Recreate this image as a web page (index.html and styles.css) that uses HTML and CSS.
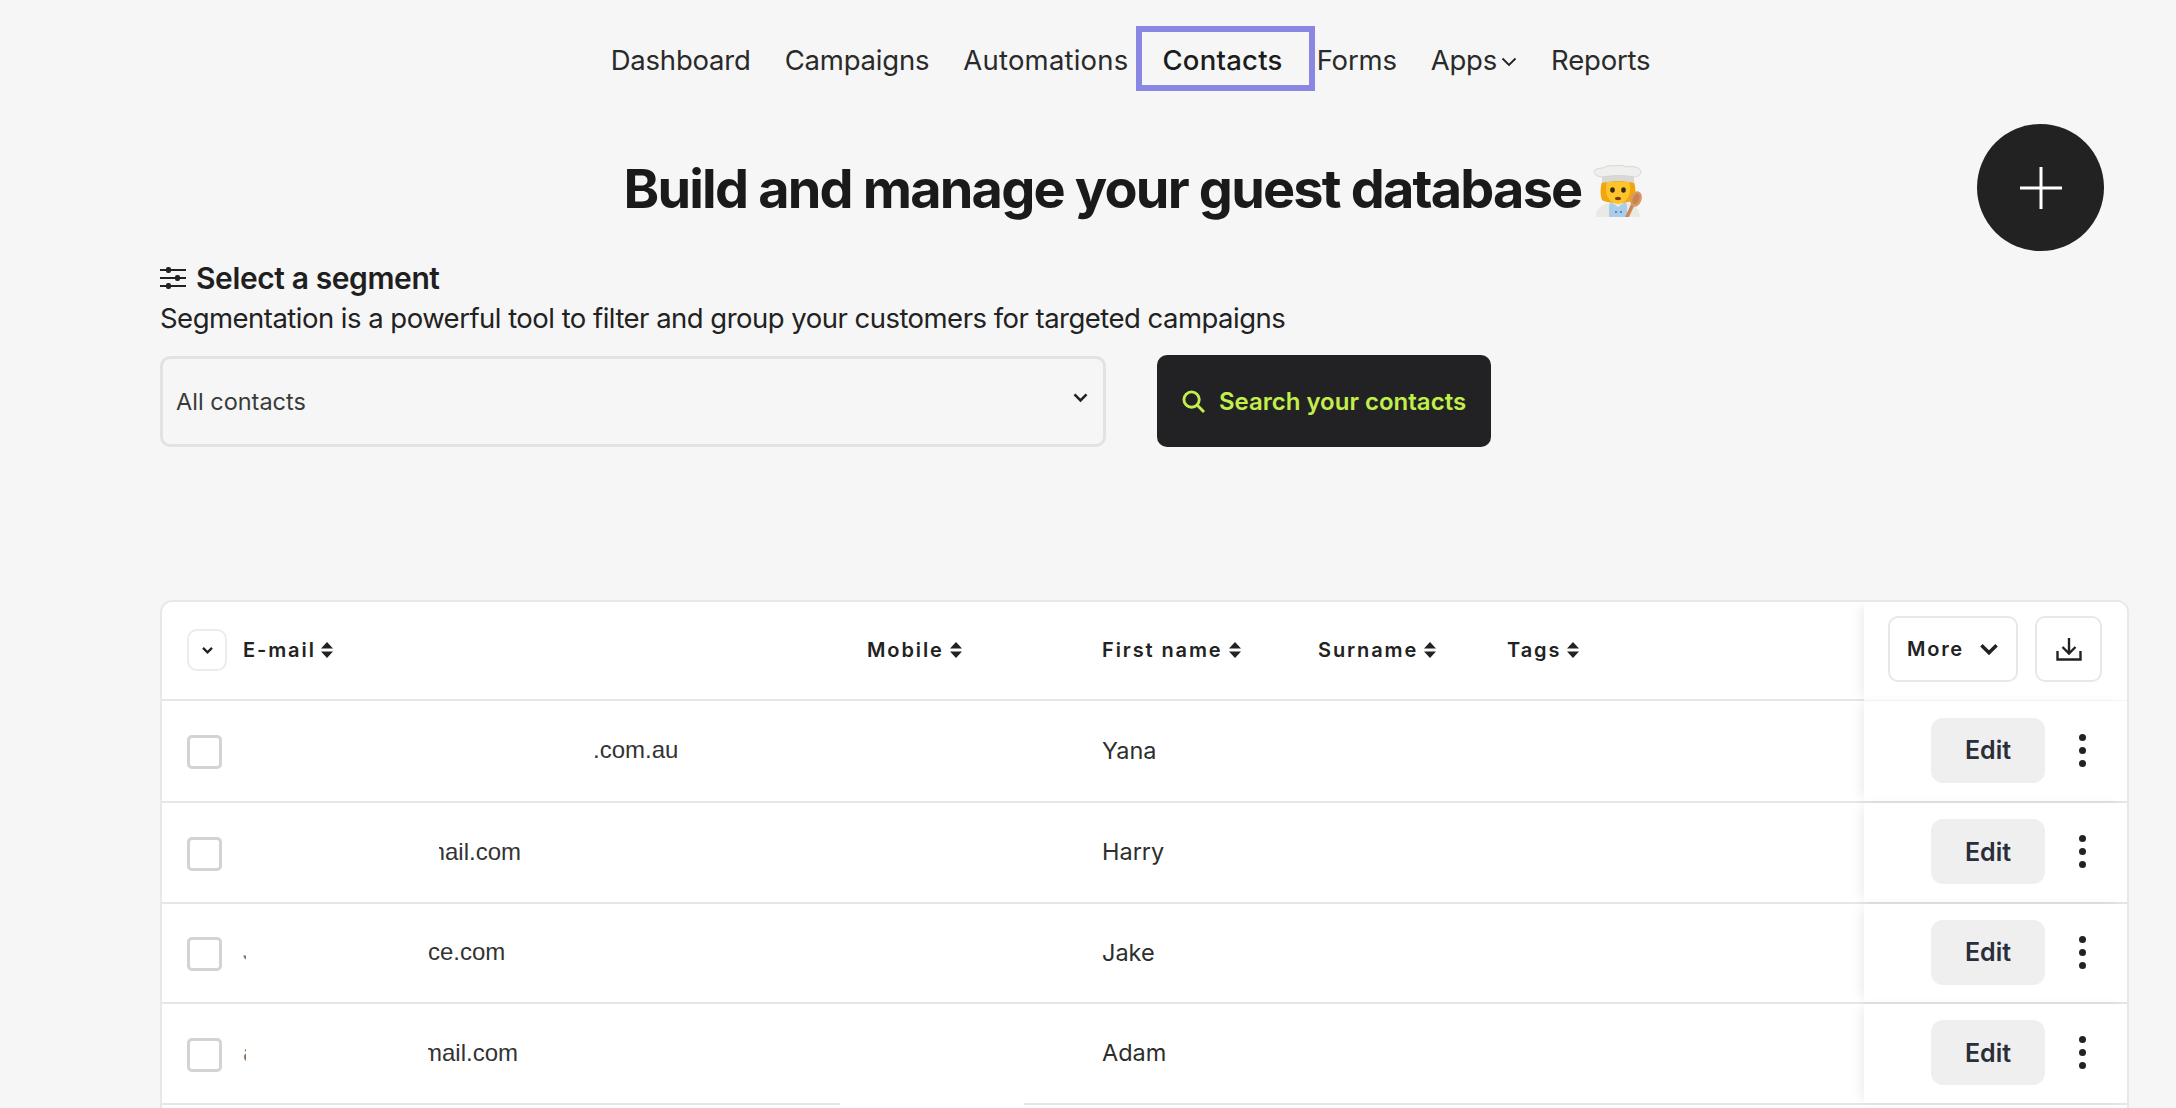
FILE: index.html
```html
<!DOCTYPE html>
<html lang="en">
<head>
<meta charset="utf-8">
<title>Contacts</title>
<link rel="stylesheet" href="styles.css">
</head>
<body>
<nav class="nav">
  <a class="nav-item">Dashboard</a>
  <a class="nav-item">Campaigns</a>
  <a class="nav-item nav-auto">Automations</a>
  <a class="nav-item nav-active">Contacts</a>
  <a class="nav-item">Forms</a>
  <a class="nav-item nav-apps">Apps
    <svg class="nav-chev" viewBox="0 0 16 10"><path d="M1.5 1.5 8 8l6.500-6.500" fill="none" stroke="#222" stroke-width="1.800"/></svg>
  </a>
  <a class="nav-item">Reports</a>
</nav>

<header class="hero">
  <h1 class="title">Build and manage your guest database
    <svg class="chef" viewBox="0 0 48 52">
      <path d="M2 52c0-7 4-11 10-13l12-3 12 3c6 2 10 6 10 13z" fill="#e9e9e6"/>
      <path d="M17 37l7 5 7-5 2 3v12H15V40z" fill="#a9cdea"/>
      <path d="M21 46h2v2h-2zM26 46h2v2h-2z" fill="#5d87ad"/>
      <path d="M9 14h30c3 8 3 15 1 21-5 4-27 4-32 0-2-6-2-13 1-21z" fill="#f2a50c"/>
      <path d="M13 17h22c1 2 1 5 1 8 0 8-6 14-12 14s-12-6-12-14c0-3 0-6 1-8z" fill="#fdc52b"/>
      <ellipse cx="18.500" cy="25" rx="2.300" ry="2.800" fill="#3a2812"/>
      <ellipse cx="29.500" cy="25" rx="2.300" ry="2.800" fill="#3a2812"/>
      <ellipse cx="24" cy="33.500" rx="3" ry="1.700" fill="#7c3a10"/>
      <path d="M8 9h32v9c-9-2.500-23-2.500-32 0z" fill="#d8d8d6"/>
      <path d="M9 12C2 12-1 8 1 5c2-2 6-2 8-2 3-2 8-3 12-2 4-1 8-1 11 1 3-1 8-1 12 1 5 3 4 8-4 9-9-2-22-2-31 0z" fill="#efefed" stroke="#cfcfcd" stroke-width=".8"/>
      <path d="M33 52l7-15" stroke="#c98a55" stroke-width="3.600" stroke-linecap="round"/>
      <ellipse cx="42" cy="34" rx="5.500" ry="8" fill="#d99866" transform="rotate(20 42 34)"/>
      <ellipse cx="42" cy="34" rx="3.200" ry="5.500" fill="#c68450" transform="rotate(20 42 34)"/>
    </svg>
  </h1>
  <button class="fab" aria-label="Add">
    <svg viewBox="0 0 44 44"><path d="M22 1v42M1 22h42" stroke="#fff" stroke-width="3" fill="none"/></svg>
  </button>
</header>

<section class="segment">
  <h2 class="seg-title">
    <svg class="seg-icon" viewBox="0 0 26 24"><path d="M0 4h26M0 12h26M0 20h26" stroke="#222" stroke-width="2" fill="none"/><rect x="6" y="1" width="5" height="6" rx="2" fill="#222"/><rect x="15" y="9" width="5" height="6" rx="2" fill="#222"/><rect x="6" y="17" width="5" height="6" rx="2" fill="#222"/></svg>
    Select a segment</h2>
  <p class="seg-desc">Segmentation is a powerful tool to filter and group your customers for targeted campaigns</p>
  <div class="seg-controls">
    <div class="select">All contacts
      <svg class="select-chev" viewBox="0 0 14 10"><path d="M2 2l5 5 5-5" fill="none" stroke="#222" stroke-width="2.200"/></svg>
    </div>
    <button class="search">
      <svg class="search-icon" viewBox="0 0 24 24"><circle cx="10" cy="10" r="8" fill="none" stroke="#c3ee4b" stroke-width="3"/><path d="M16 16l7 7" stroke="#c3ee4b" stroke-width="3" fill="none"/></svg>
      Search your contacts</button>
  </div>
</section>

<section class="table">
  <div class="row row-head">
    <div class="c-check"><span class="caret-btn"><svg viewBox="0 0 14 10"><path d="M2 2l5 5 5-5" fill="none" stroke="#222" stroke-width="2.600"/></svg></span></div>
    <div class="c-email th">E-mail <svg class="sort" viewBox="0 0 12 16"><path d="M6 0l6 6.500H0zM6 16l6-6.500H0z" fill="#222"/></svg></div>
    <div class="c-mobile th">Mobile <svg class="sort" viewBox="0 0 12 16"><path d="M6 0l6 6.500H0zM6 16l6-6.500H0z" fill="#222"/></svg></div>
    <div class="c-first th">First name <svg class="sort" viewBox="0 0 12 16"><path d="M6 0l6 6.500H0zM6 16l6-6.500H0z" fill="#222"/></svg></div>
    <div class="c-sur th">Surname <svg class="sort" viewBox="0 0 12 16"><path d="M6 0l6 6.500H0zM6 16l6-6.500H0z" fill="#222"/></svg></div>
    <div class="c-tags th">Tags <svg class="sort" viewBox="0 0 12 16"><path d="M6 0l6 6.500H0zM6 16l6-6.500H0z" fill="#222"/></svg></div>
    <div class="c-sticky sticky-head">
      <button class="more">More <svg viewBox="0 0 18 12"><path d="M2 2l7 7 7-7" fill="none" stroke="#222" stroke-width="3.200"/></svg></button>
      <button class="dl" aria-label="Download"><svg viewBox="0 0 26 24"><path d="M13 1v15M6.500 10l6.500 6.500 6.500-6.500M1.500 14v8.500h23V14" fill="none" stroke="#222" stroke-width="2.400"/></svg></button>
    </div>
  </div>

  <div class="row row-tall">
    <div class="c-check"><span class="check"></span></div>
    <div class="c-email"><span class="frag frag-a">.com.au</span></div>
    <div class="c-mobile"></div>
    <div class="c-first td">Yana</div>
    <div class="c-sur"></div>
    <div class="c-tags"></div>
    <div class="c-sticky"><button class="edit">Edit</button><span class="kebab"><i></i><i></i><i></i></span></div>
  </div>
  <div class="row">
    <div class="c-check"><span class="check"></span></div>
    <div class="c-email"><span class="frag frag-b">mail.com</span></div>
    <div class="c-mobile"></div>
    <div class="c-first td">Harry</div>
    <div class="c-sur"></div>
    <div class="c-tags"></div>
    <div class="c-sticky"><button class="edit">Edit</button><span class="kebab"><i></i><i></i><i></i></span></div>
  </div>
  <div class="row row-short">
    <div class="c-check"><span class="check"></span></div>
    <div class="c-email"><span class="sliver">J</span><span class="frag frag-c">ce.com</span></div>
    <div class="c-mobile"></div>
    <div class="c-first td">Jake</div>
    <div class="c-sur"></div>
    <div class="c-tags"></div>
    <div class="c-sticky"><button class="edit">Edit</button><span class="kebab"><i></i><i></i><i></i></span></div>
  </div>
  <div class="row">
    <div class="c-check"><span class="check"></span></div>
    <div class="c-email"><span class="sliver">a</span><span class="frag frag-d">mail.com</span></div>
    <div class="c-mobile"></div>
    <div class="c-first td">Adam</div>
    <div class="c-sur"></div>
    <div class="c-tags"></div>
    <div class="c-sticky"><button class="edit">Edit</button><span class="kebab"><i></i><i></i><i></i></span></div>
  </div>
  <div class="line-gap"></div>
</section>
</body>
</html>
```
FILE: styles.css
```css
* { box-sizing: border-box; }
html, body { margin: 0; height: 1108px; overflow: hidden; }
body {
  background: #f6f6f6;
  color: #1f1f1f;
  font-family: Inter, "Liberation Sans", sans-serif;
}
button { font-family: inherit; cursor: pointer; }

.nav {
  display: flex;
  justify-content: center;
  align-items: center;
  height: 91px;
  padding: 29px 0 0 0;
  margin-left: 85px;
  font-size: 27.500px;
  letter-spacing: -0.200px;
}
.nav-item { position: relative; padding: 0 17px; white-space: nowrap; color: #2a2a2a; }
.nav-auto { letter-spacing: .2px; }
.nav-active { font-weight: 500; color: #1c1c1c; letter-spacing: .25px; }
.nav-active::after {
  content: "";
  position: absolute;
  left: -9px; right: -15px; top: -17px; bottom: -14px;
  border: 6px solid #8a87e2;
}
.nav-apps { display: flex; align-items: center; gap: 4px; }
.nav-chev { width: 16px; height: 10px; margin-top: 3px; }

.hero { position: relative; height: 148px; display: flex; justify-content: center; padding-top: 48px; }
.title {
  margin: 0 0 0 90px;
  font-size: 54px;
  line-height: 78px;
  font-weight: 700;
  letter-spacing: -1.800px;
  color: #1a1a1a;
  white-space: nowrap;
  display: flex;
  align-items: center;
  gap: 13px;
}
.chef { width: 48px; height: 52px; margin-top: 4px; }
.fab {
  position: absolute;
  left: 1977px; top: 33px;
  width: 127px; height: 127px;
  border: 0; border-radius: 50%;
  background: #222223;
  display: flex; align-items: center; justify-content: center;
}
.fab svg { width: 44px; height: 44px; }

.segment { padding: 20px 0 0 160px; }
.seg-title { margin: 0; display: flex; align-items: center; gap: 10px; font-size: 30px; line-height: 38px; font-weight: 600; color: #1f1f1f; letter-spacing: -0.400px; }
.seg-icon { width: 26px; height: 24px; }
.seg-desc { margin: 2px 0 0; font-size: 27.500px; line-height: 38px; color: #222; letter-spacing: -0.520px; }
.seg-controls { display: flex; gap: 51px; margin-top: 19px; }
.select {
  position: relative;
  width: 946px; height: 91px;
  border: 3px solid #e2e2e2; border-radius: 10px;
  display: flex; align-items: center;
  padding-left: 13px;
  font-size: 23.500px; color: #3a3a3a;
}
.select-chev { position: absolute; right: 14px; top: 33px; width: 17px; height: 12px; }
.search {
  width: 334px; height: 92px; margin-top: -1px;
  background: #222224; border: 0; border-radius: 10px;
  display: flex; align-items: center; justify-content: center; gap: 14px;
  font-size: 24px; font-weight: 600; color: #c3ee4b;
}
.search-icon { width: 23px; height: 23px; }

.table {
  position: relative;
  margin: 153px 0 0 160px;
  width: 1969px; height: 560px;
  background: #fff;
  border: 2px solid #e8e8e8;
  border-radius: 12px;
  overflow: hidden;
}
.row {
  display: flex;
  align-items: center;
  height: 101px;
  padding-left: 25px;
  border-bottom: 2px solid #e6e6e6;
  font-size: 23.500px;
}
.row-head { height: 99px; }
.row-tall { height: 102px; }
.row-short { height: 100px; }
.c-check { width: 56px; flex: none; display: flex; }
.c-email { width: 624px; flex: none; display: flex; align-items: center; }
.c-mobile { width: 235px; flex: none; }
.c-first { width: 216px; flex: none; }
.c-sur { width: 189px; flex: none; }
.c-tags { flex: 1; }
.th { margin-top: -2px; font-size: 20px; font-weight: 600; letter-spacing: 1.900px; color: #222; white-space: nowrap; }
.c-email.th { gap: 6px; }
.td { margin-top: -2px; color: #2e2e2e; }
.sort { width: 12px; height: 16px; margin-left: -1px; vertical-align: -1px; }
.caret-btn {
  width: 40px; height: 42px; margin-top: -1px;
  border: 2px solid #ececec; border-radius: 10px;
  display: flex; align-items: center; justify-content: center;
}
.caret-btn svg { width: 13px; height: 9px; }
.check { width: 35px; height: 34px; margin-top: 2px; border: 3px solid #d3d3d3; border-radius: 5px; }
.frag { margin-top: -2px; white-space: nowrap; color: #333; font-family: "Liberation Sans", sans-serif; font-size: 24px; }
.frag-a { margin-left: 350px; }
.frag-b, .frag-d { display: flex; justify-content: flex-end; overflow: hidden; }
.frag-b { margin-left: 196px; width: 82px; }
.frag-c { margin-left: 182px; }
.frag-d { margin-left: 182px; width: 90px; }
.sliver { margin-top: -2px; width: 3px; overflow: hidden; font-family: "Liberation Sans", sans-serif; font-size: 24px; color: #777; }

.c-sticky {
  width: 263px; flex: none; height: 100%;
  background: #fff;
  display: flex; align-items: center; justify-content: flex-end;
  padding-right: 33px;
  box-shadow: -6px 0 12px -4px rgba(0,0,0,.09);
  gap: 17px;
}
.sticky-head {
  padding-right: 25px;
  height: calc(100% + 2px);
  margin-bottom: -2px;
  border-bottom: 1px solid #f6f6f6;
}
.more {
  width: 130px; height: 66px; margin-top: -4px;
  background: #fff; border: 2px solid #e8e8e8; border-radius: 10px;
  display: flex; align-items: center; justify-content: center; gap: 15px;
  font-size: 20px; font-weight: 600; letter-spacing: 1.700px; color: #222;
}
.more svg { width: 20px; height: 13px; }
.dl {
  width: 67px; height: 66px; margin-top: -4px;
  background: #fff; border: 2px solid #e8e8e8; border-radius: 10px;
  display: flex; align-items: center; justify-content: center; padding: 0;
}
.dl svg { width: 26px; height: 24px; }
.edit {
  width: 114px; height: 65px; margin-top: -2px;
  background: #efefef; border: 0; border-radius: 12px;
  font-size: 25px; font-weight: 600; color: #2a2d3a;
}
.kebab { width: 24px; margin-left: 8px; margin-top: -2px; display: flex; flex-direction: column; align-items: center; gap: 6px; }
.kebab i { width: 7px; height: 7px; border-radius: 50%; background: #222; }
.line-gap { position: absolute; left: 678px; top: 500px; width: 184px; height: 6px; background: #fff; }
```
